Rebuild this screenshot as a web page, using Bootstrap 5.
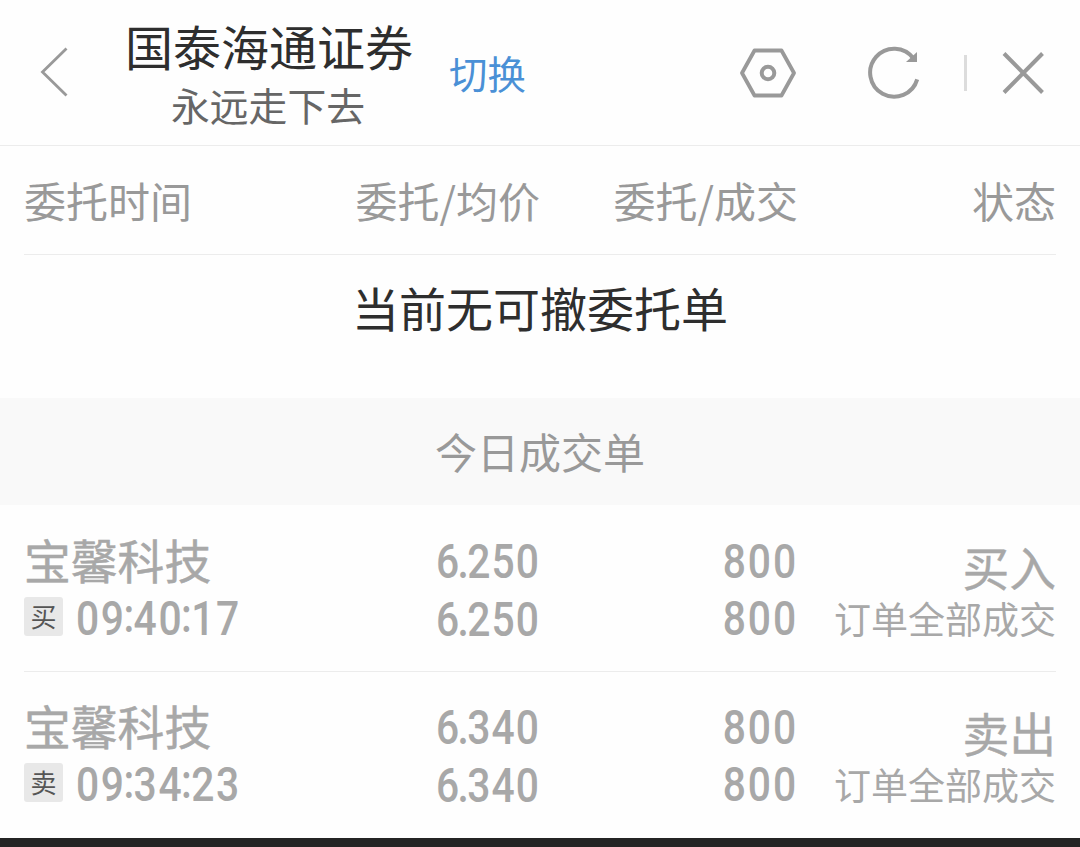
<!DOCTYPE html>
<html lang="zh-CN">
<head>
  <meta charset="UTF-8">
  <meta name="viewport" content="width=device-width, initial-scale=1.0">
  <title>委托撤单</title>
  <link href="https://cdn.jsdelivr.net/npm/bootstrap@5.3.3/dist/css/bootstrap.min.css" rel="stylesheet">
  <style>
    body {
      font-family: "Noto Sans CJK SC", sans-serif;
      background: #fefefe;
      color: #2e2e2e;
      height: 847px;
      overflow: hidden;
      white-space: nowrap;
    }
    svg { display: block; }

    /* 顶部栏 */
    .top-bar { height: 146px; border-bottom: 1px solid #ececec; padding-left: 38px; padding-right: 33px; }
    .back-icon { margin-bottom: 2px; }
    .broker-box { margin-left: 54px; width: 290px; }
    .broker-name { font-size: 48px; line-height: 60px; margin-top: 2px; }
    .account-name { font-size: 38.8px; line-height: 58px; color: #666; margin-left: -2px; }
    .switch-link { font-size: 38.4px; line-height: 58px; color: #4a90d6; margin-left: 35px; margin-bottom: 1px; }
    .refresh-icon { margin-left: 54px; }
    .split-line { width: 3px; height: 36px; background: #dcdcdc; }

    /* 表头 */
    .list-head { height: 109px; margin: 0 24px; border-bottom: 1px solid #ececec; font-size: 42px; line-height: 108px; color: #999; }
    .empty-tip { height: 143px; font-size: 47px; line-height: 104px; }
    .section-title { height: 107px; font-size: 42px; line-height: 106px; color: #999; background: #f9f9f9; }

    /* 成交记录 */
    .deal-row { height: 166px; margin: 0 24px; padding-top: 25px; color: #a8a8a8; }
    .deal-row + .deal-row { border-top: 1px solid #ececec; padding-top: 24px; }
    .stock-name { font-size: 46.8px; line-height: 57px; -webkit-text-stroke: .5px; }
    .digits { font-family: Roboto, sans-serif; font-size: 48px; line-height: 58px; font-weight: 500; padding-top: 3px; transform: scaleX(.85); transform-origin: right; }
    .price { letter-spacing: 1.2px; }
    .price .tight { letter-spacing: -1.8px; }
    .amount { letter-spacing: 2.2px; }
    .amount div + div { line-height: 56px; }
    .deal-time { letter-spacing: 1.9px; transform-origin: left; }
    .deal-time .tight { letter-spacing: -.7px; }
    .deal-time i { display: inline-block; font-style: normal; line-height: 40px; vertical-align: 3px; }
    .side-tag { width: 39px; height: 39px; border-radius: 3px; background: #e8e8e8; color: #555; font-size: 26px; line-height: 38px; margin-right: 13px; margin-bottom: 2px; }
    .deal-side { font-size: 46.8px; line-height: 58px; padding-top: 7px; -webkit-text-stroke: .4px; }
    .deal-status { font-size: 37px; line-height: 46px; }
    .bottom-bar { height: 9px; background: #242424; }
  </style>
  <script src="https://cdn.jsdelivr.net/npm/bootstrap@5.3.3/dist/js/bootstrap.bundle.min.js"></script>
</head>
<body class="d-flex flex-column">

<!-- 顶部栏 -->
<header class="top-bar d-flex align-items-center flex-shrink-0">
  <svg class="back-icon" width="32" height="50" viewBox="0 0 32 50" fill="none" stroke="#999" stroke-width="2.8">
    <path d="M28.500 1.500 4.500 25 28.500 48.500"/>
  </svg>
  <div class="broker-box text-center">
    <div class="broker-name">国泰海通证券</div>
    <div class="account-name">永远走下去</div>
  </div>
  <a href="#" class="switch-link text-decoration-none">切换</a>
  <div class="d-flex align-items-center ms-auto">
    <svg width="58" height="52" viewBox="0 0 58 52" fill="none" stroke="#999" stroke-width="3.8" stroke-linejoin="round">
      <path d="M15.5 3.5h27L55 26 42.5 48.5h-27L3 26z"/>
      <circle cx="29" cy="26" r="6.300" stroke-width="4"/>
    </svg>
    <svg class="refresh-icon" width="113" height="54" viewBox="0 0 113 54" fill="none" stroke="#999" stroke-width="4">
      <path d="M66.2 33.4A24 24 0 1 1 62.5 12.5"/>
      <path d="M66 6v10H55z" fill="#999" stroke="none"/>
    </svg>
    <div class="split-line"></div>
    <svg class="ms-4" width="56" height="52" viewBox="0 0 56 52" fill="none" stroke="#999" stroke-width="4">
      <path d="M13 6.5 51.500 45.500M51.500 6.500 13 45.500"/>
    </svg>
  </div>
</header>

<!-- 可撤委托 -->
<div class="list-head row g-0 flex-shrink-0">
  <div class="col-3">委托时间</div>
  <div class="col-3 text-end">委托/均价</div>
  <div class="col-3 text-end">委托/成交</div>
  <div class="col-3 text-end">状态</div>
</div>
<div class="empty-tip text-center flex-shrink-0">当前无可撤委托单</div>

<!-- 今日成交 -->
<div class="section-title text-center flex-shrink-0">今日成交单</div>
<div class="deal-row row g-0 flex-shrink-0">
  <div class="col-3">
    <div class="stock-name">宝馨科技</div>
    <div class="d-flex align-items-center">
      <span class="side-tag text-center">买</span>
      <span class="digits deal-time">0<span class="tight">9<i>:</i></span>4<span class="tight">0<i>:</i></span>17</span>
    </div>
  </div>
  <div class="col-3 text-end digits price">
    <div><span class="tight">6.</span>250</div>
    <div><span class="tight">6.</span>250</div>
  </div>
  <div class="col-3 text-end digits amount">
    <div>800</div>
    <div>800</div>
  </div>
  <div class="col-3 text-end">
    <div class="deal-side">买入</div>
    <div class="deal-status">订单全部成交</div>
  </div>
</div>
<div class="deal-row row g-0 flex-shrink-0">
  <div class="col-3">
    <div class="stock-name">宝馨科技</div>
    <div class="d-flex align-items-center">
      <span class="side-tag text-center">卖</span>
      <span class="digits deal-time">0<span class="tight">9<i>:</i></span>3<span class="tight">4<i>:</i></span>23</span>
    </div>
  </div>
  <div class="col-3 text-end digits price">
    <div><span class="tight">6.</span>340</div>
    <div><span class="tight">6.</span>340</div>
  </div>
  <div class="col-3 text-end digits amount">
    <div>800</div>
    <div>800</div>
  </div>
  <div class="col-3 text-end">
    <div class="deal-side">卖出</div>
    <div class="deal-status">订单全部成交</div>
  </div>
</div>

<div class="bottom-bar mt-auto flex-shrink-0"></div>
</body>
</html>
